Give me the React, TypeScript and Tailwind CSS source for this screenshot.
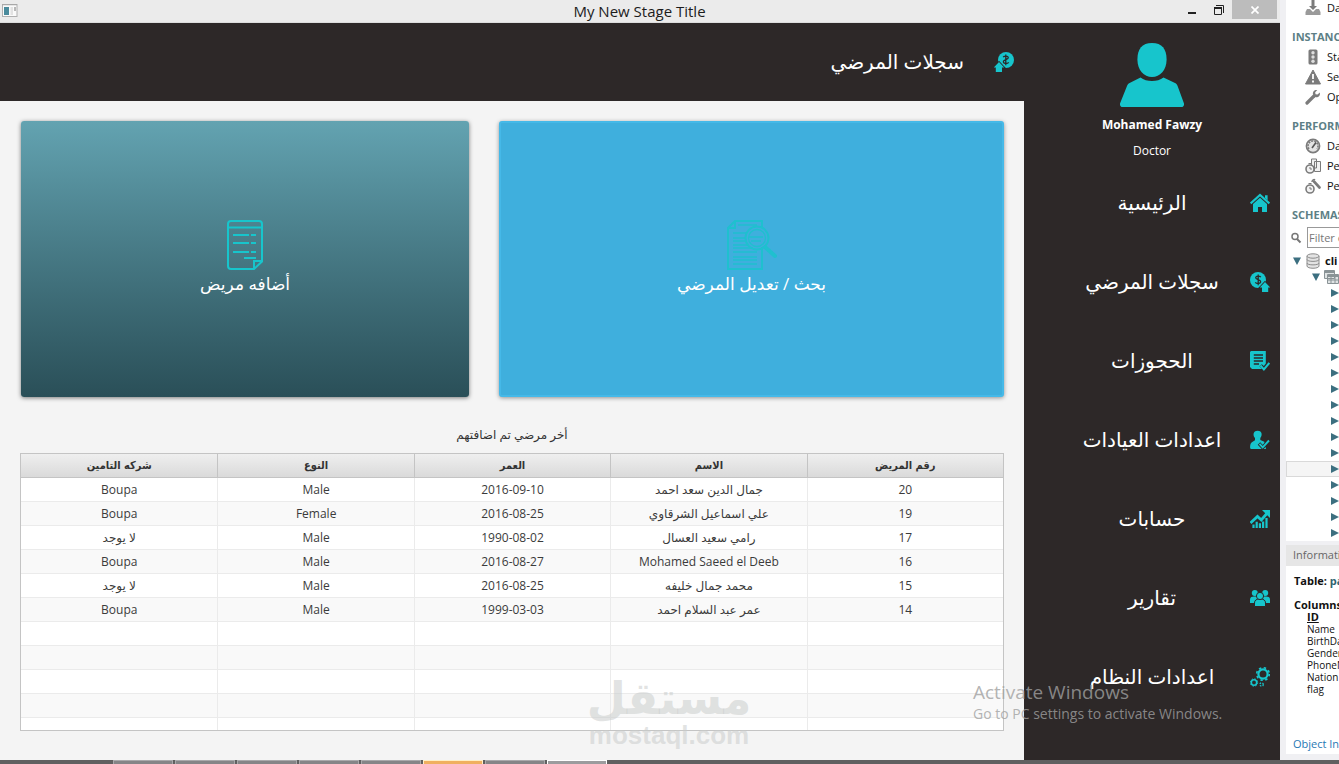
import type { ReactNode } from "react";

const TEAL = "#17c5cc";
const DARK = "#2d2828";

function HomeIcon() {
  return (
    <svg width="20" height="20" viewBox="0 0 20 20" aria-hidden="true">
      <path d="M.6 10.400 10 2l9.400 8.400" fill="none" stroke={TEAL} strokeWidth="2.200" />
      <path d="M15 2.200h2.600v5L15 5z" fill={TEAL} />
      <path d="M10 4.800 17 11v8h-5v-5H8v5H3v-8z" fill={TEAL} />
    </svg>
  );
}

function PatientsIcon({ flip = false }: { flip?: boolean }) {
  return (
    <svg width="20" height="20" viewBox="0 0 20 20" aria-hidden="true" className={flip ? "-scale-x-100" : ""}>
      <circle cx="8" cy="8" r="8" fill={TEAL} />
      <path
        d="M10.800 5.200C10 4 6 3.600 5.700 5.700c-.3 2.200 5.200 1.800 5 4.200-.2 2.200-4.400 1.900-5.400.4M8.200 2.600v10.600"
        fill="none"
        stroke={DARK}
        strokeWidth="1.300"
      />
      <path
        d="M15 10 20.200 15.500h-2V20H12v-4.500H9.800z"
        fill={TEAL}
        stroke={DARK}
        strokeWidth="1.600"
        style={{ paintOrder: "stroke" }}
      />
    </svg>
  );
}

function BookingsIcon() {
  return (
    <svg width="20" height="20" viewBox="0 0 20 20" aria-hidden="true">
      <path d="M1 0h14.800v12.500l-2 2.500-2-1.800-2.300 2L12 18H2L0 16V1z" fill={TEAL} />
      <path d="M3.800 4H13M3.800 7H13M3.800 10H13M3.800 13H9" stroke={DARK} strokeWidth="1.300" />
      <path d="m10.500 14.500 3.400 3.900L19.300 12" fill="none" stroke={TEAL} strokeWidth="2" />
    </svg>
  );
}

function ClinicIcon() {
  return (
    <svg width="20" height="20" viewBox="0 0 20 20" aria-hidden="true">
      <path d="M7.600.8c5 0 4.700 5 2.700 7.200v2l4 1.800L16 19H1.200C0 19 0 17.500.2 15.500.5 12.500 2 12 5 10.200V8C2.800 5.800 2.800.8 7.600.8z" fill={TEAL} />
      <path d="m9 13.500 3.700 4L19.400 10" fill="none" stroke={DARK} strokeWidth="3.400" />
      <path d="m9.500 13.800 3.200 3.500L19 10.500" fill="none" stroke={TEAL} strokeWidth="1.900" />
    </svg>
  );
}

function AccountsIcon() {
  return (
    <svg width="20" height="20" viewBox="0 0 20 20" aria-hidden="true">
      <path d="m.5 14 7-6.500 3.800 3.500 6-7" fill="none" stroke={TEAL} strokeWidth="2.800" />
      <path d="M12 1h8v8z" fill={TEAL} />
      <path d="M3.500 15.500V19M6.700 12.800V19M9.900 14.200V19M13.100 12.500V19M16.500 9V19" stroke={TEAL} strokeWidth="2.200" />
    </svg>
  );
}

function ReportsIcon() {
  return (
    <svg width="20" height="20" viewBox="0 0 20 20" aria-hidden="true">
      <g fill={TEAL}>
        <circle cx="4.800" cy="5" r="3" />
        <circle cx="15.200" cy="5" r="3" />
        <path d="M0 15v-3.500C0 9 2 8.400 4 8.400h12c2 0 4 .6 4 3.100V15z" />
      </g>
      <g fill={TEAL} stroke={DARK} strokeWidth="1">
        <path d="M4.500 18.500V15c0-3 2-4 5.500-4s5.500 1 5.500 4v3.500z" />
        <circle cx="10" cy="8" r="3.600" />
      </g>
    </svg>
  );
}

function SettingsIcon() {
  return (
    <svg width="20" height="20" viewBox="0 0 20 20" aria-hidden="true" fill="none" stroke={TEAL}>
      <circle cx="13" cy="7" r="4.600" strokeWidth="2.200" />
      <circle cx="13" cy="7" r="6.300" strokeWidth="1.600" strokeDasharray="2.400 2.548" />
      <circle cx="4" cy="15.500" r="2.700" strokeWidth="1.600" />
      <circle cx="4" cy="15.500" r="3.700" strokeWidth="1" strokeDasharray="1.400 1.506" />
      <circle cx="11.600" cy="17.500" r="1.700" strokeWidth="1.400" strokeDasharray="1.400 1.270" />
    </svg>
  );
}

function AvatarIcon() {
  return (
    <svg width="64" height="64" viewBox="0 0 64 64" aria-hidden="true" fill={TEAL}>
      <path d="M32 0c10 0 14.600 6 14.600 16.500C46.600 27 40 34 32 34S17.400 27 17.400 16.500C17.400 6 22 0 32 0z" />
      <path d="M20.500 34.500c6 4.700 17 4.700 23 0L55 40c1.500.8 2 1.700 2.600 3L64 60.500c.4 2-.8 3.500-2.500 3.500h-59C.8 64-.4 62.500 0 60.500L7 43c.6-1.300 1.200-2.200 2.600-3z" />
    </svg>
  );
}

function AddPatientIcon() {
  return (
    <svg width="36" height="50" viewBox="0 0 36 50" aria-hidden="true" fill="none" stroke={TEAL} strokeWidth="2">
      <path d="M26.500 49H4a3 3 0 0 1-3-3V4a3 3 0 0 1 3-3h28a3 3 0 0 1 3 3v37.500L27 49v-8h8M1 7.500h34" />
      <path d="M6 15h16M24 15h5M6 23h16M24 23h5M6 32h16M24 32h5M17 38h12" />
    </svg>
  );
}

function SearchPatientIcon() {
  return (
    <svg width="50" height="50" viewBox="0 0 50 50" aria-hidden="true" fill="none" stroke="#1fc0cf" strokeWidth="2">
      <path d="M35 8V1H8L1 8v41h34V27M1 8h7V1" />
      <path d="M11 5h19M6 13h13M6 18h12M6 21h12M6 25h15M6 28h20M6 32h24M6 37h24M6 40h24M6 44h24" strokeWidth="1.300" />
      <circle cx="30" cy="18" r="11.500" strokeWidth="2" />
      <circle cx="30" cy="18" r="8.500" strokeWidth="1.300" />
      <path d="M22 17h14M24 21h10" strokeWidth="1.300" />
      <path d="m38 27 10 9" strokeWidth="4" strokeLinecap="round" />
    </svg>
  );
}

const NAV: { label: string; icon: ReactNode }[] = [
  { label: "الرئيسية", icon: <HomeIcon /> },
  { label: "سجلات المرضي", icon: <PatientsIcon /> },
  { label: "الحجوزات", icon: <BookingsIcon /> },
  { label: "اعدادات العيادات", icon: <ClinicIcon /> },
  { label: "حسابات", icon: <AccountsIcon /> },
  { label: "تقارير", icon: <ReportsIcon /> },
  { label: "اعدادات النظام", icon: <SettingsIcon /> },
];

const HEADERS = ["رقم المريض", "الاسم", "العمر", "النوع", "شركه التامين"];

const ROWS = [
  ["20", "جمال الدين سعد احمد", "2016-09-10", "Male", "Boupa"],
  ["19", "علي اسماعيل الشرقاوي", "2016-08-25", "Female", "Boupa"],
  ["17", "رامي سعيد العسال", "1990-08-02", "Male", "لا يوجد"],
  ["16", "Mohamed Saeed el Deeb", "2016-08-27", "Male", "Boupa"],
  ["15", "محمد جمال خليفه", "2016-08-25", "Male", "لا يوجد"],
  ["14", "عمر عبد السلام احمد", "1999-03-03", "Male", "Boupa"],
];

const EMPTY_ROWS = ["h-6", "h-6", "h-6", "h-6", "h-3"];

function TitleBar() {
  return (
    <div className="flex h-[23px] items-start border-b border-[#dcdcdc] bg-[#ebebeb]">
      <div className="flex flex-1 pt-1 pl-0.5">
        <svg width="16" height="14" viewBox="0 0 16 14" aria-hidden="true">
          <rect x=".5" y=".5" width="14.500" height="12" fill="#fafafa" stroke="#b0b0b0" />
          <path d="M0 .5h15" stroke="#a8a8a8" strokeWidth="1.500" />
          <rect x="2" y="3" width="5" height="8" fill="#4a8b9c" />
          <rect x="8.500" y="3" width="2.500" height="8" fill="#e2e2e2" />
          <rect x="12" y="3" width="2" height="4" fill="#b8b8b8" />
        </svg>
      </div>
      <h1 className="text-[15px] leading-[23px] text-[#1c1c1c]">My New Stage Title</h1>
      <div className="flex flex-1 justify-end pr-[3px]">
        <button aria-label="Minimize" className="flex h-[19px] w-[26px] items-center justify-center">
          <svg width="8" height="10" aria-hidden="true">
            <rect y="7" width="8" height="2" fill="#222" />
          </svg>
        </button>
        <button aria-label="Restore" className="flex h-[19px] w-[27px] items-center justify-center">
          <svg width="10" height="10" viewBox="0 0 10 10" aria-hidden="true" fill="none" stroke="#222">
            <path d="M2 .5h7.500V8M.5 3v6.500h7V3" />
            <path d="M0 3h8" strokeWidth="2" />
          </svg>
        </button>
        <button aria-label="Close" className="flex h-[19px] w-[45px] items-center justify-center bg-[#bcbcbc]">
          <svg width="8" height="8" viewBox="0 0 8 8" aria-hidden="true">
            <path d="m.5.5 7 7m0-7-7 7" stroke="#fff" strokeWidth="1.700" />
          </svg>
        </button>
      </div>
    </div>
  );
}

function PatientTable() {
  return (
    <div className="border border-[#c4c4c4] bg-white">
      <table dir="rtl" className="w-full table-fixed border-separate border-spacing-0 text-[12px] text-[#3b3b3b]">
        <thead>
          <tr className="h-6 bg-linear-to-b from-[#efefef] to-[#d9d9d9]">
            {HEADERS.map((h) => (
              <th
                key={h}
                className="border-b border-l border-[#c4c4c4] p-0 font-['DejaVu_Sans_Condensed','DejaVu_Sans',sans-serif] text-[11px] leading-4 font-bold text-[#333] last:border-l-0"
              >
                {h}
              </th>
            ))}
          </tr>
        </thead>
        <tbody>
          {ROWS.map((row) => (
            <tr key={row[0]} className="h-6 even:bg-[#f9f9f9]">
              {row.map((cell, i) => (
                <td key={i} className="border-b border-l border-[#ebebeb] p-0 text-center leading-4 last:border-l-0">
                  <bdi>{cell}</bdi>
                </td>
              ))}
            </tr>
          ))}
          {EMPTY_ROWS.map((height, r) => (
            <tr key={r} className={`${height} even:bg-[#f9f9f9]`}>
              {HEADERS.map((h) => (
                <td
                  key={h}
                  className={
                    r === EMPTY_ROWS.length - 1
                      ? "border-l border-[#ebebeb] p-0 last:border-l-0"
                      : "border-b border-l border-[#ebebeb] p-0 last:border-l-0"
                  }
                />
              ))}
            </tr>
          ))}
        </tbody>
      </table>
    </div>
  );
}

function Watermark() {
  return (
    <div className="pointer-events-none absolute bottom-[13px] left-[588px] flex w-[162px] flex-col items-center font-bold text-[#c9cccb]/55">
      <span className="text-[45px] leading-[52px]">مستقل</span>
      <span className="font-['Liberation_Sans'] text-[26px] leading-6">mostaql.com</span>
    </div>
  );
}

function Sidebar() {
  return (
    <aside className="w-64 shrink-0 bg-[#2d2828] pt-5 text-white">
      <div className="flex flex-col items-center">
        <AvatarIcon />
        <p className="mt-2 text-[12px] leading-5 font-bold">Mohamed Fawzy</p>
        <p className="mt-1.5 text-[12px] leading-5">Doctor</p>
      </div>
      <nav className="mt-0.5">
        {NAV.map((item) => (
          <a key={item.label} href="#" className="grid h-[79px] grid-cols-[40px_1fr_40px] items-center">
            <span className="col-start-2 text-center text-[20px] leading-8 whitespace-nowrap">{item.label}</span>
            <span className="flex justify-center">{item.icon}</span>
          </a>
        ))}
      </nav>
    </aside>
  );
}

const GREY = "#7b7b7b";

function ImportIcon() {
  return (
    <svg width="16" height="16" viewBox="0 0 16 16" aria-hidden="true" className="shrink-0">
      <path d="M6.500 0h3v6H12L8 10 4 6h2.500z" fill={GREY} />
      <path d="M2 9h3l3 3 3-3h3l1.500 3v3H.5v-3z" fill="#9a9a9a" />
    </svg>
  );
}

function StatusIcon() {
  return (
    <svg width="16" height="16" viewBox="0 0 16 16" aria-hidden="true" className="shrink-0">
      <rect x="3.500" y=".5" width="9" height="15" rx="1.500" fill={GREY} />
      <g fill="#dedede">
        <circle cx="8" cy="3.800" r="1.700" />
        <circle cx="8" cy="8" r="1.700" />
        <circle cx="8" cy="12.200" r="1.700" />
      </g>
    </svg>
  );
}

function WarningIcon() {
  return (
    <svg width="16" height="16" viewBox="0 0 16 16" aria-hidden="true" className="shrink-0">
      <path d="M8 1 15.500 15H.5z" fill={GREY} stroke={GREY} strokeLinejoin="round" />
      <path d="M8 5v5M8 11.500v2" stroke="#fff" strokeWidth="1.800" />
    </svg>
  );
}

function WrenchIcon() {
  return (
    <svg width="16" height="16" viewBox="0 0 16 16" aria-hidden="true" className="shrink-0">
      <path d="m2 14 7-7" stroke={GREY} strokeWidth="3.200" strokeLinecap="round" />
      <path d="M14.800 3.500 12.500 5.500l-2-.3-.3-2L12.300 1C9.500.5 7.400 2.600 8 5.500l2.500 2.700c3 .5 5-1.700 4.300-4.700z" fill={GREY} />
    </svg>
  );
}

function GaugeIcon() {
  return (
    <svg width="16" height="16" viewBox="0 0 16 16" aria-hidden="true" className="shrink-0">
      <circle cx="8" cy="8" r="6.600" fill="#e4e4e4" stroke={GREY} strokeWidth="1.600" />
      <path d="M4 11a5 5 0 1 1 8 0" fill="none" stroke={GREY} strokeWidth="1.600" strokeDasharray="2 1" />
      <path d="M7 10 11 4.500" stroke="#555" strokeWidth="1.600" />
    </svg>
  );
}

function ReportTimerIcon() {
  return (
    <svg
      width="16"
      height="16"
      viewBox="0 0 16 16"
      aria-hidden="true"
      className="shrink-0"
      fill="#f2f2f2"
      stroke={GREY}
    >
      <path d="M6.500 1h5v9h-5zM9.500 3.500h6v10h-6z" />
      <circle cx="5" cy="11" r="4" strokeWidth="1.600" />
      <path d="M5 9v2h2M3.500 5.500h3" />
    </svg>
  );
}

function TimerWrenchIcon() {
  return (
    <svg
      width="16"
      height="16"
      viewBox="0 0 16 16"
      aria-hidden="true"
      className="shrink-0"
      fill="#f2f2f2"
      stroke={GREY}
    >
      <circle cx="5" cy="11" r="4" strokeWidth="1.600" />
      <path d="M5 9v2h2M3.500 5.500h3" />
      <path d="m9 3.500 5.500 6" strokeWidth="2.600" strokeLinecap="round" />
      <path d="M7 4c0-2 2-3 3-2" fill="none" strokeWidth="1.500" />
    </svg>
  );
}

function ToolRow({ icon, label }: { icon: ReactNode; label: string }) {
  return (
    <li className="flex h-5 items-center gap-1.5 pl-[19px]">
      {icon}
      <span>{label}</span>
    </li>
  );
}

function PanelHeading({ children }: { children: string }) {
  return <h2 className="h-5 pl-1.5 text-[11px] leading-5 font-bold text-[#5d7f86]">{children}</h2>;
}

function Triangle({ down = false }: { down?: boolean }) {
  return (
    <svg width="8" height="8" viewBox="0 0 8 8" aria-hidden="true" className="shrink-0" fill="#3c6f80">
      {down ? <path d="M0 .5h8L4 8z" /> : <path d="M0 0v8l8-4z" />}
    </svg>
  );
}

const TREE_ROWS = Array.from({ length: 16 }, (_, i) => i);
const COLUMNS = ["Name", "BirthDa", "Gender", "PhoneN", "Nation", "flag"];

function SchemaPanel() {
  return (
    <section className="flex w-[59px] shrink-0 flex-col overflow-hidden border-l-6 border-[#f0f0f3] bg-white text-[11px] whitespace-nowrap text-[#111]">
      <ul className="-mt-0.5">
        <ToolRow icon={<ImportIcon />} label="Da" />
      </ul>
      <div className="mt-[9px]">
        <PanelHeading>INSTANC</PanelHeading>
        <ul>
          <ToolRow icon={<StatusIcon />} label="Sta" />
          <ToolRow icon={<WarningIcon />} label="Se" />
          <ToolRow icon={<WrenchIcon />} label="Op" />
        </ul>
      </div>
      <div className="mt-[9px]">
        <PanelHeading>PERFORM</PanelHeading>
        <ul>
          <ToolRow icon={<GaugeIcon />} label="Da" />
          <ToolRow icon={<ReportTimerIcon />} label="Pe" />
          <ToolRow icon={<TimerWrenchIcon />} label="Pe" />
        </ul>
      </div>
      <div className="mt-[9px]">
        <PanelHeading>SCHEMAS</PanelHeading>
        <div className="mt-0.5 flex items-center gap-1 pl-[5px]">
          <svg width="12" height="12" viewBox="0 0 12 12" aria-hidden="true" className="shrink-0" fill="none" stroke="#777">
            <circle cx="4" cy="4.500" r="3" strokeWidth="1.500" />
            <path d="m6 7 3.500 3.500" strokeWidth="2" />
          </svg>
          <input
            aria-label="Filter objects"
            placeholder="Filter o"
            className="h-[21px] w-20 shrink-0 border border-[#999] bg-white px-px text-[11px] placeholder:text-[#777]"
          />
        </div>
      </div>
      <ul className="mt-[5px]">
        <li className="flex h-4 items-center gap-[5px] pl-[7px]">
          <Triangle down />
          <svg width="14" height="16" viewBox="0 0 14 16" aria-hidden="true" className="shrink-0" fill="#e3e3e3" stroke="#8c8c8c">
            <path d="M1 3v10c0 3 12 3 12 0V3" />
            <ellipse cx="7" cy="3" rx="6" ry="2.200" />
            <path d="M1 6.500c0 2.500 12 2.500 12 0M1 10c0 2.500 12 2.500 12 0" fill="none" />
          </svg>
          <span className="font-bold">cli</span>
        </li>
        <li className="flex h-4 items-center gap-1 pl-[26px]">
          <Triangle down />
          <svg width="16" height="14" viewBox="0 0 16 14" aria-hidden="true" className="shrink-0" fill="#dfe3e4" stroke="#8a9396">
            <path d="M.5.500h10v8H.5zM3.500 4.500h11v9h-11z" />
            <path d="M.5 2h10M3.500 6h11" strokeWidth="2" />
            <path d="M3.500 10h11M7 6v7.500M11 6v7.500" />
          </svg>
        </li>
        {TREE_ROWS.map((i) => (
          <li
            key={i}
            className={
              i === 11
                ? "flex h-4 items-center border border-r-0 border-[#d9d9d9] bg-[#f5f5f5] pl-11"
                : "flex h-4 items-center pl-[45px]"
            }
          >
            <Triangle />
          </li>
        ))}
      </ul>
      <div className="h-1 bg-[#f0f0f3]" />
      <h2 className="h-[21px] bg-[#e6e6e6] pl-[7px] leading-5 text-[#666]">Informati</h2>
      <p className="mt-[5px] pl-2 leading-5 font-bold">
        Table: <span className="text-[#2f6470]">pa</span>
      </p>
      <p className="mt-2 pl-2 leading-3 font-bold">Columns</p>
      <ul className="pl-[21px] text-[10px] leading-3">
        <li className="text-[11px] font-bold underline">ID</li>
        {COLUMNS.map((c) => (
          <li key={c}>{c}</li>
        ))}
      </ul>
      <a href="#" className="mt-auto pl-[7px] leading-5 text-[#1f78b4]">
        Object In
      </a>
      <div className="h-1.5 bg-[#f0f0f3]" />
    </section>
  );
}

const TASKS = [
  "border-[#a9a9ab] bg-[#858587]",
  "border-[#a9a9ab] bg-[#858587]",
  "border-[#a9a9ab] bg-[#858587]",
  "border-[#a9a9ab] bg-[#858587]",
  "border-[#a9a9ab] bg-[#858587]",
  "border-[#fff0c8] bg-[#f0b060]",
  "border-[#a9a9ab] bg-[#858587]",
  "border-[#ffffff] bg-[#9c9c9e]",
];

export default function App() {
  return (
    <div className="relative flex min-h-screen flex-col overflow-hidden bg-[#f4f4f4] font-['Open_Sans','DejaVu_Sans',sans-serif]">
      <div className="flex flex-1">
        <div className="flex min-w-0 flex-1 flex-col">
          <TitleBar />
          <div className="flex flex-1">
            <main className="relative min-w-0 flex-1">
              <header className="flex h-[78px] items-center justify-end gap-[30px] bg-[#2d2828] pr-2.5 text-white">
                <h2 className="text-[20px] leading-8">سجلات المرضي</h2>
                <PatientsIcon flip />
              </header>
              <div className="px-5 pt-5">
                <div className="flex h-[276px] gap-[30px] pl-px">
                  <button className="flex w-0 flex-[450] flex-col items-center justify-center rounded-[3px] bg-linear-to-b from-[#63a3b1] to-[#2a4f58] text-white shadow-[0_1px_4px_rgba(0,0,0,0.5)]">
                    <AddPatientIcon />
                    <span className="text-[17px] leading-7">أضافه مريض</span>
                  </button>
                  <button className="flex w-0 flex-[503] flex-col items-center justify-center rounded-[3px] border-2 border-[#45b9e8] bg-[#3fafdd] text-white shadow-[0_1px_4px_rgba(0,0,0,0.4)]">
                    <SearchPatientIcon />
                    <span className="text-[17px] leading-7">بحث / تعديل المرضي</span>
                  </button>
                </div>
                <h3 className="mt-7 mb-2 text-center text-[12px] leading-5 text-[#333]">أخر مرضي تم اضافتهم</h3>
                <PatientTable />
              </div>
              <Watermark />
            </main>
            <Sidebar />
          </div>
        </div>
        <SchemaPanel />
      </div>
      <div className="flex h-1 gap-0.5 overflow-hidden bg-[#606060] pl-[113px]">
        {TASKS.map((style, i) => (
          <div key={i} className={`w-15 border border-b-0 ${style}`} />
        ))}
      </div>
      <div className="pointer-events-none absolute right-[111px] bottom-10 w-[255px] whitespace-nowrap text-[#a0a0a0]/80">
        <p className="text-[19px] leading-6">Activate Windows</p>
        <p className="text-[14px] leading-5">Go to PC settings to activate Windows.</p>
      </div>
    </div>
  );
}
